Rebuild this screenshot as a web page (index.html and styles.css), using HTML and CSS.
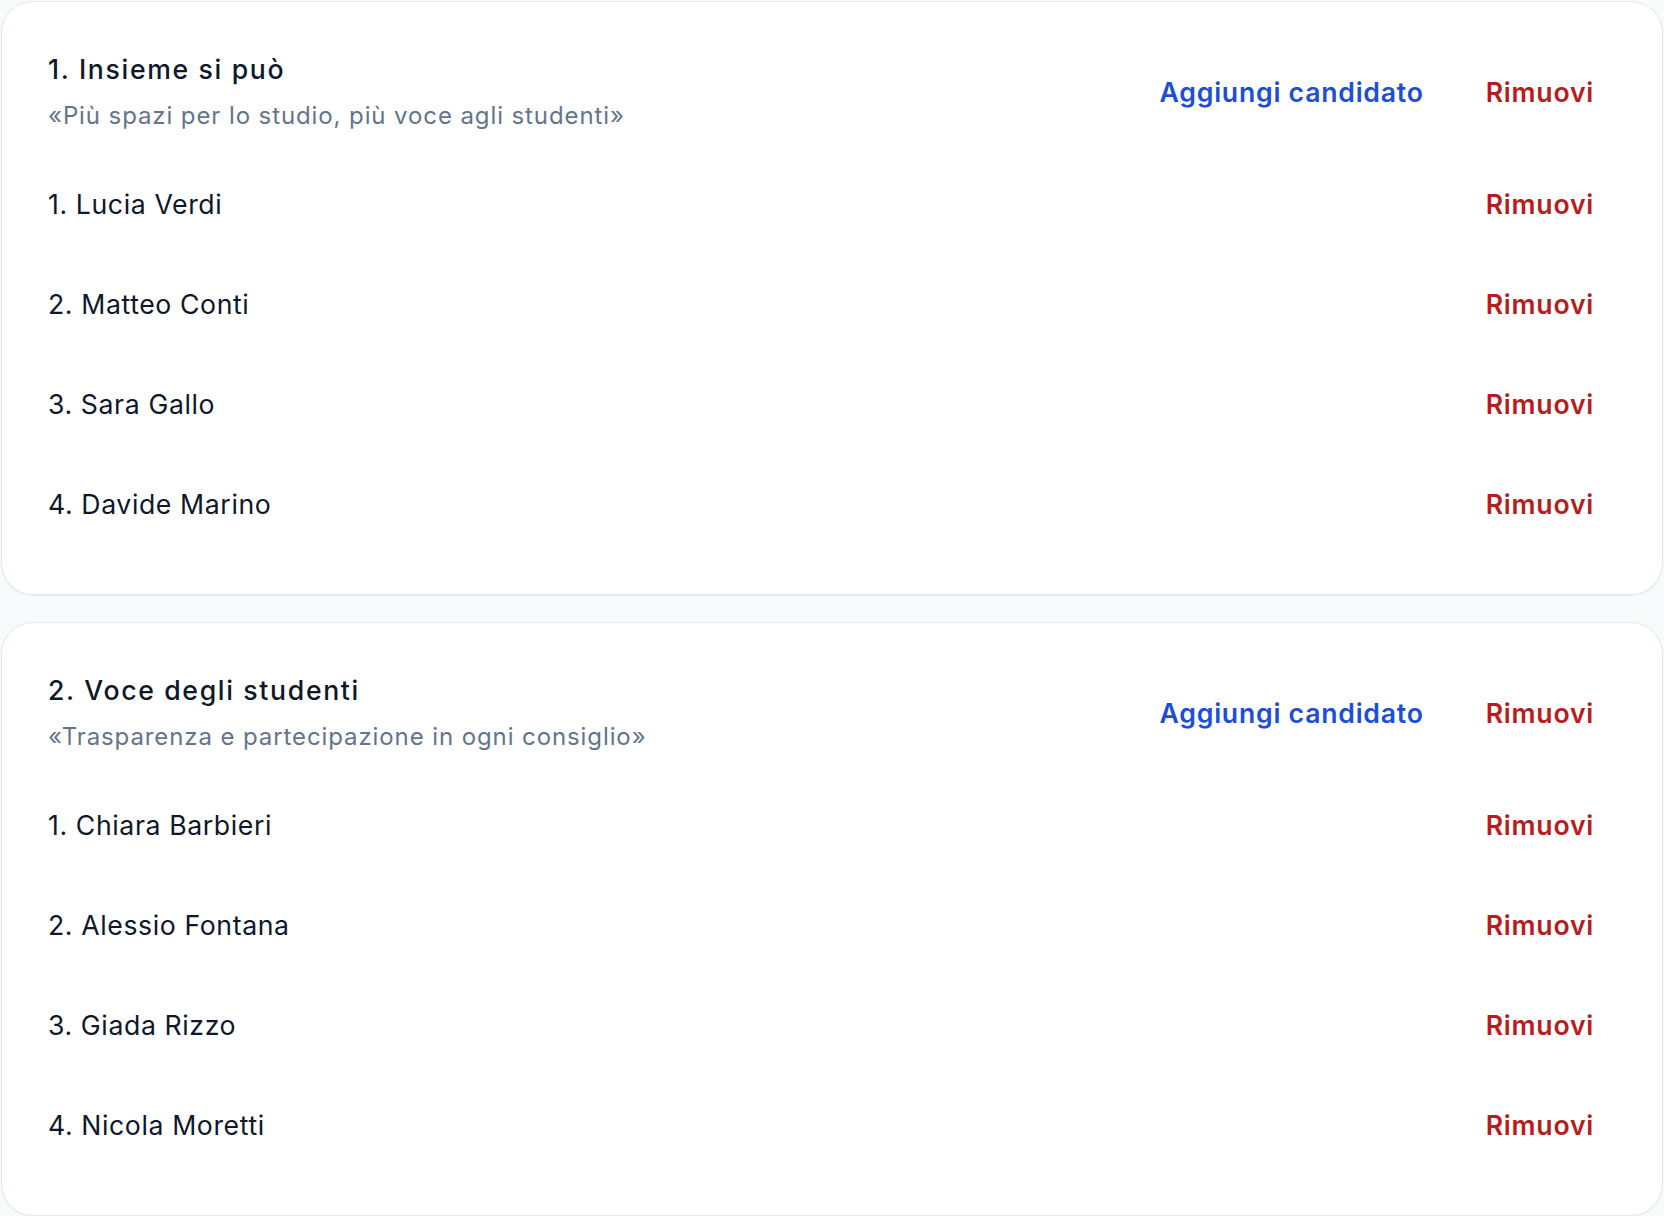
FILE: index.html
```html
<!DOCTYPE html>
<html lang="it">
<head>
<meta charset="utf-8">
<title>Liste</title>
<link rel="stylesheet" href="styles.css">
</head>
<body>
<main class="lists">
  <section class="card">
    <div class="card-head">
      <div class="head-text">
        <h2 class="list-title">1. Insieme si può</h2>
        <p class="list-motto">«Più spazi per lo studio, più voce agli studenti»</p>
      </div>
      <div class="actions">
        <button class="btn btn-add">Aggiungi candidato</button>
        <button class="btn btn-remove">Rimuovi</button>
      </div>
    </div>
    <ul class="candidates">
      <li class="candidate"><span class="cand-name">1. Lucia Verdi</span><button class="btn btn-remove">Rimuovi</button></li>
      <li class="candidate"><span class="cand-name">2. Matteo Conti</span><button class="btn btn-remove">Rimuovi</button></li>
      <li class="candidate"><span class="cand-name">3. Sara Gallo</span><button class="btn btn-remove">Rimuovi</button></li>
      <li class="candidate"><span class="cand-name">4. Davide Marino</span><button class="btn btn-remove">Rimuovi</button></li>
    </ul>
  </section>
  <section class="card">
    <div class="card-head">
      <div class="head-text">
        <h2 class="list-title">2. Voce degli studenti</h2>
        <p class="list-motto">«Trasparenza e partecipazione in ogni consiglio»</p>
      </div>
      <div class="actions">
        <button class="btn btn-add">Aggiungi candidato</button>
        <button class="btn btn-remove">Rimuovi</button>
      </div>
    </div>
    <ul class="candidates">
      <li class="candidate"><span class="cand-name">1. Chiara Barbieri</span><button class="btn btn-remove">Rimuovi</button></li>
      <li class="candidate"><span class="cand-name">2. Alessio Fontana</span><button class="btn btn-remove">Rimuovi</button></li>
      <li class="candidate"><span class="cand-name">3. Giada Rizzo</span><button class="btn btn-remove">Rimuovi</button></li>
      <li class="candidate"><span class="cand-name">4. Nicola Moretti</span><button class="btn btn-remove">Rimuovi</button></li>
    </ul>
  </section>
</main>
</body>
</html>
```

FILE: styles.css
```css
* { box-sizing: border-box; }
html, body {
  margin: 0;
  padding: 0;
  background: #f8fafc;
  font-family: Inter, "Noto Sans", "Liberation Sans", sans-serif;
  color: #0f172a;
}
.lists {
  display: flex;
  flex-direction: column;
  gap: 27px;
  padding: 1px 1px 0 1px;
}
.card {
  background: #ffffff;
  border: 1px solid #e2e8f0;
  border-radius: 32px;
  box-shadow: 0 1px 2px rgba(15, 23, 42, 0.05);
  padding: 47px 47px 40px 46px;
}
.card-head {
  display: flex;
  align-items: center;
  justify-content: space-between;
  margin-bottom: 20px;
}
.head-text {
  display: flex;
  flex-direction: column;
  gap: 9px;
}
.list-title {
  margin: 0;
  font-size: 26.67px;
  line-height: 40px;
  font-weight: 500;
  letter-spacing: 1.65px;
  color: #0f172a;
}
.list-motto {
  margin: 0;
  font-size: 24px;
  line-height: 36px;
  letter-spacing: 0.9px;
  color: #64748b;
}
.actions {
  display: flex;
  align-items: center;
  gap: 20px;
}
.btn {
  background: none;
  border: 0;
  padding: 0 21px;
  font-family: inherit;
  font-size: 26.67px;
  line-height: 40px;
  font-weight: 600;
  letter-spacing: 0.75px;
  cursor: pointer;
}
.btn-add { color: #1d4ed8; }
.btn-remove { color: #b91c1c; }
.candidates {
  list-style: none;
  margin: 0;
  padding: 0;
}
.candidate {
  display: flex;
  align-items: center;
  justify-content: space-between;
  padding: 30px 0;
}
.cand-name {
  font-size: 26.67px;
  line-height: 40px;
  letter-spacing: 0.6px;
  color: #0f172a;
}
```
